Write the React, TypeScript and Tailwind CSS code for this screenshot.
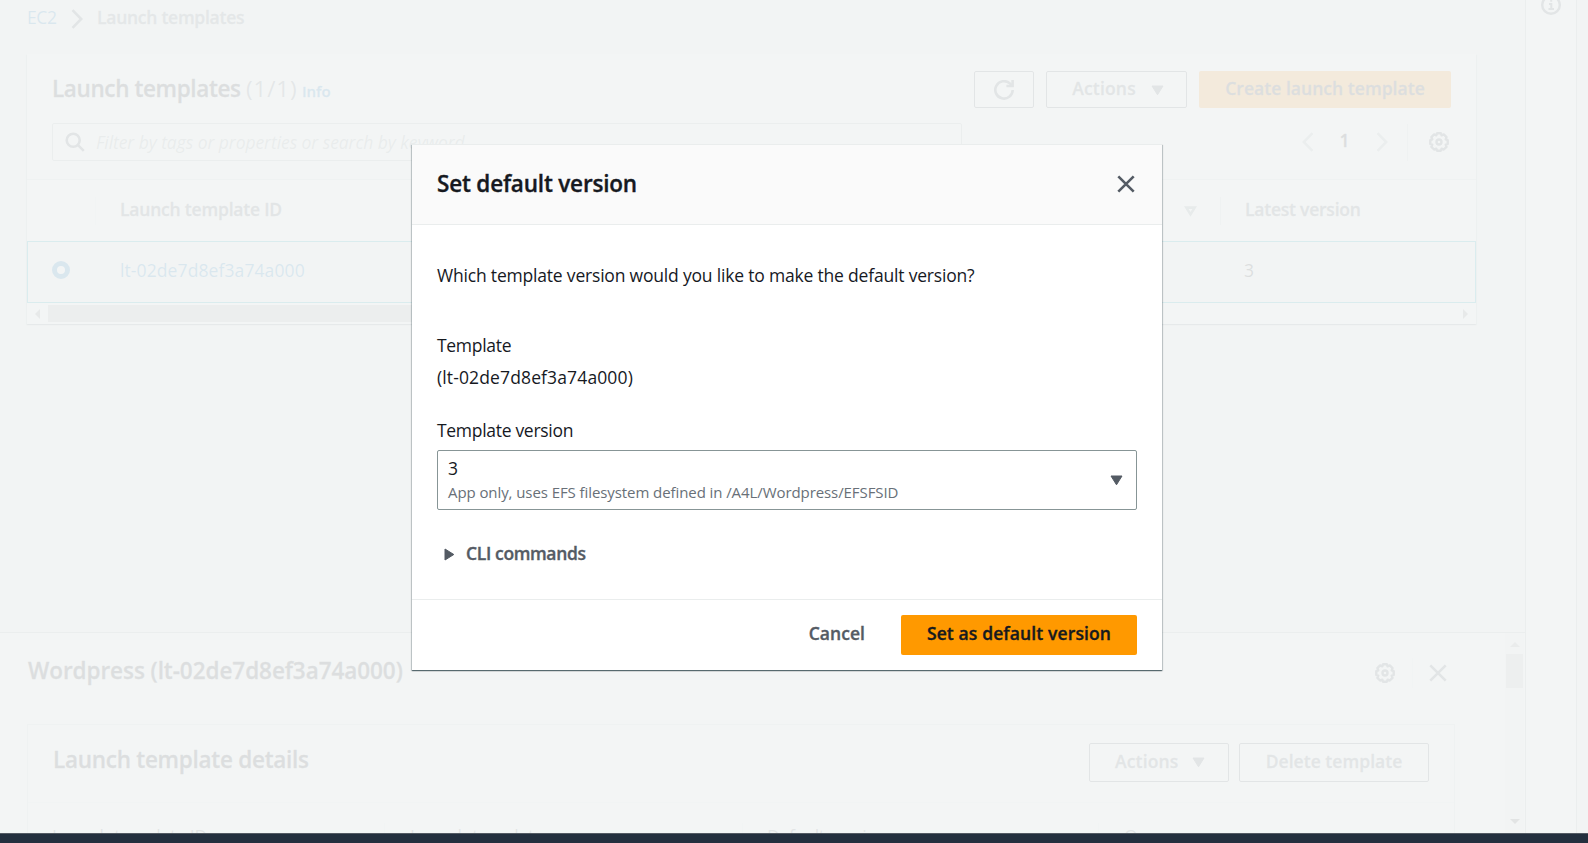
import React from "react";

function Caret({ className = "" }: { className?: string }) {
  return (
    <svg viewBox="0 0 13 11" className={`h-[11px] w-[13px] shrink-0 ${className}`} fill="currentColor" stroke="currentColor" strokeLinejoin="round">
      <path d="M1 1H12L6.5 9.8Z" strokeWidth="1" />
    </svg>
  );
}

function Cross({ className = "" }: { className?: string }) {
  return (
    <svg viewBox="0 0 20 20" className={`h-5 w-5 shrink-0 ${className}`} fill="none" stroke="currentColor" strokeWidth="2.6">
      <path d="M2.3 2.3L17.7 17.7M17.7 2.3L2.3 17.7" />
    </svg>
  );
}

function Gear() {
  return (
    <svg viewBox="0 0 20 20" className="h-5 w-5 shrink-0" fill="none" stroke="currentColor" strokeWidth="2.4" strokeLinejoin="round">
      <path d="M8.1 1.3H11.9L12.6 3.3L14.8 2.4L17.5 5.1L16.7 7.3L18.7 8.1V11.9L16.7 12.6L17.5 14.8L14.8 17.5L12.6 16.7L11.9 18.7H8.1L7.3 16.7L5.1 17.5L2.4 14.8L3.3 12.6L1.3 11.9V8.1L3.3 7.3L2.4 5.1L5.1 2.4L7.3 3.3Z" />
      <circle cx="10" cy="10" r="2.5" />
    </svg>
  );
}

function Chevron({ left = false, className = "" }: { left?: boolean; className?: string }) {
  return (
    <svg viewBox="0 0 12 20" className={`h-5 w-3 shrink-0 ${className}`} fill="none" stroke="currentColor" strokeWidth="2.6">
      <path d={left ? "M10.5 1.2L1.8 10L10.5 18.8" : "M1.5 1.2L10.2 10L1.5 18.8"} />
    </svg>
  );
}

function Breadcrumb() {
  return (
    <nav className="flex h-[54px] items-start pl-[27px] text-[17.5px] leading-[35px]">
      <a className="w-[44px] tracking-[-0.35px] text-[#0073bb]">EC2</a>
      <Chevron className="mt-[9px] w-[12px] text-[#545b64]" />
      <span className="ml-[14px] font-semibold tracking-[-0.26px] text-[#687078] [-webkit-text-stroke:0.35px]">Launch templates</span>
    </nav>
  );
}

function TemplateTable() {
  return (
    <section className="ml-[27px] flex h-[270px] w-[1449px] flex-col bg-white shadow-[0_1px_1px_#001c244d,1px_1px_1px_#001c2426,-1px_1px_1px_#001c2426]">
      <header className="flex h-[69px] items-start pl-[25px] pr-[25px] pt-[17px]">
        <h2 className="w-[194px] whitespace-nowrap text-[22.5px] font-semibold leading-[36px] tracking-[-0.38px] text-[#16191f] [-webkit-text-stroke:0.35px]">Launch templates</h2>
        <span className="w-[56px] text-[22.5px] leading-[36px] tracking-[0.85px] text-[#687078]">(1/1)</span>
        <a className="pt-[3px] text-[15px] font-semibold leading-[35px] text-[#0073bb] [-webkit-text-stroke:0.3px]">Info</a>
        <div className="ml-auto flex h-[37px] text-[17.5px] font-semibold leading-[32px] [-webkit-text-stroke:0.35px]">
          <button className="flex w-[60px] items-center justify-center rounded-[2px] border border-[#545b64] text-[#545b64]">
            <svg viewBox="0 0 20 20" className="h-5 w-5" fill="none" stroke="currentColor" strokeWidth="2.6">
              <path d="M18.7 10A8.7 8.7 0 1 1 15.8 3.4L17.6 5.2" />
              <path d="M18.6 0V6H12.4" />
            </svg>
          </button>
          <button className="ml-3 flex w-[141px] items-center rounded-[2px] border border-[#545b64] pl-[25px] tracking-[0.19px] text-[#545b64]">
            <span className="w-[64px] whitespace-nowrap pb-[3px]">Actions</span>
            <Caret className="ml-[15px] mt-[1px]" />
          </button>
          <button className="ml-3 w-[252px] rounded-[2px] bg-[#ff8c00] pb-[3px] tracking-[0.04px] text-[#16191f]">Create launch template</button>
        </div>
      </header>
      <div className="flex h-14 items-start pl-[25px] pr-[27px]">
        <div className="flex h-[38px] w-[910px] items-center rounded-[2px] border border-[#aab7b8] pl-[12px]">
          <svg viewBox="0 0 20 20" className="h-5 w-5 text-[#545b64]" fill="none" stroke="currentColor" strokeWidth="2.6">
            <circle cx="8.2" cy="8.2" r="6.5" />
            <path d="M12.8 12.8L18.8 18.8" />
          </svg>
          <span className="ml-[11px] pb-px text-[17.5px] italic leading-[34px] tracking-[-0.07px] text-[#98a4a5]">Filter by tags or properties or search by keyword</span>
        </div>
        <div className="ml-auto flex h-[38px] items-center">
          <Chevron left className="text-[#aab7b8]" />
          <span className="w-[61px] pb-1 text-center text-[17.5px] font-semibold leading-[30px] text-[#16191f] [-webkit-text-stroke:0.35px]">1</span>
          <Chevron className="ml-px text-[#aab7b8]" />
          <span className="ml-[19px] mr-[21px] h-[37px] w-px bg-[#d5dbdb]" />
          <span className="text-[#545b64]"><Gear /></span>
        </div>
      </div>
      <div className="flex h-[62px] shrink-0 items-center border-t border-[#d5dbdb] text-[17.5px] font-semibold leading-[34px] text-[#545b64] [-webkit-text-stroke:0.35px]">
        <span className="h-7 w-[69px] border-r border-[#eaeded]" />
        <span className="-mt-[3px] w-[1080px] pl-6 tracking-[-0.2px]">Launch template ID</span>
        <svg viewBox="0 0 13 11" className="ml-[8px] mt-0.5 h-[11px] w-[13px] text-[#879596]" fill="none" stroke="currentColor" strokeWidth="2.6">
          <path d="M2.3 1.6H10.7L6.5 8.4Z" />
        </svg>
        <span className="ml-[23px] h-7 w-px bg-[#d5dbdb]" />
        <span className="-mt-[3px] ml-[24px] tracking-[-0.23px]">Latest version</span>
      </div>
      <div className="flex h-[62px] shrink-0 items-center border border-[#00a1b9] bg-[#f2f3f3] text-[17.5px] leading-[34px]">
        <span className="-mt-[4px] ml-6 h-[18px] w-[18px] rounded-full border-[5.5px] border-[#0073bb] bg-white" />
        <a className="-mt-1 ml-[50px] w-[1124px] tracking-[0.1px] text-[#0073bb]">lt-02de7d8ef3a74a000</a>
        <span className="-mt-1 text-[#16191f]">3</span>
      </div>
      <div className="flex flex-1 items-center bg-[#f8f8f8] pl-2 pr-[8px] text-[#888888]">
        <svg viewBox="0 0 5 10" className="h-[10px] w-[5px]" fill="currentColor"><path d="M5 0V10L0 5Z" /></svg>
        <span className="ml-2 h-[17px] w-[1060px] bg-[#b5b5b5]" />
        <svg viewBox="0 0 5 10" className="ml-auto h-[10px] w-[5px]" fill="currentColor"><path d="M0 0V10L5 5Z" /></svg>
      </div>
    </section>
  );
}

function DetailPanel() {
  return (
    <section className="flex h-[201px] shrink-0 border-t border-[#aab7b8] bg-[#fafafa]">
      <div className="flex w-[1505px] shrink-0 flex-col">
        <header className="flex h-[91px] shrink-0 items-start pl-[28px] pr-[57px]">
          <h2 className="pt-[20px] text-[22.5px] font-semibold leading-[36px] tracking-[-0.06px] text-[#16191f] [-webkit-text-stroke:0.35px]">Wordpress (lt-02de7d8ef3a74a000)</h2>
          <div className="ml-auto flex items-center pt-[25px] text-[#545b64]">
            <Gear />
            <span className="ml-[17px] mr-[15px] h-[30px] w-px bg-[#eaeded]" />
            <Cross />
          </div>
        </header>
        <div className="ml-[27px] flex w-[1428px] flex-1 flex-col border border-b-0 border-[#d5dbdb] bg-white">
          <header className="flex h-[78px] shrink-0 items-start border-b border-[#eaeded] pl-[25px] pr-[25px] pt-[18px] text-[17.5px] font-semibold leading-[33px] text-[#545b64] [-webkit-text-stroke:0.35px]">
            <h3 className="text-[22.5px] leading-[34px] tracking-[-0.27px] text-[#16191f]">Launch template details</h3>
            <button className="ml-auto flex h-[39px] w-[140px] items-center rounded-[2px] border border-[#545b64] pl-[25px] tracking-[0.15px]">
              <span className="w-[63px] whitespace-nowrap pb-[3px]">Actions</span>
              <Caret className="ml-[14px]" />
            </button>
            <button className="ml-2.5 h-[39px] w-[190px] rounded-[2px] border border-[#545b64] pb-[3px] tracking-[0.04px]">Delete template</button>
          </header>
          <div className="flex shrink-0 items-start pt-[20px] text-[17.5px] leading-[26px] tracking-[-0.24px] text-[#545b64] [&>span]:h-[36px] [&>span]:whitespace-nowrap">
            <span className="w-[357px] border-r border-[#eaeded] pl-6">Launch template ID</span>
            <span className="w-[358px] border-r border-[#eaeded] pl-[25px]">Launch template name</span>
            <span className="w-[356px] border-r border-[#eaeded] pl-6">Default version</span>
            <span className="pl-[25px]">Owner</span>
          </div>
        </div>
      </div>
      <div className="flex w-[19px] flex-col items-center bg-[#f1f1f1] pt-[9px] text-[#505050]">
        <svg viewBox="0 0 10 5" className="h-[5px] w-[10px] text-[#a3a3a3]" fill="currentColor"><path d="M0 5H10L5 0Z" /></svg>
        <span className="mt-[7px] h-[34px] w-[17px] bg-[#c1c1c1]" />
        <svg viewBox="0 0 10 5" className="mt-[131px] h-[5px] w-[10px]" fill="currentColor"><path d="M0 0H10L5 5Z" /></svg>
      </div>
    </section>
  );
}

function SetDefaultModal() {
  return (
    <div className="absolute left-[412px] top-[144px] flex h-[526px] w-[750px] flex-col border-t border-[#eaeded] bg-white text-[17.5px] text-[#16191f] shadow-[0_1px_1px_#001c2480,1px_1px_1px_#001c2426,-1px_1px_1px_#001c2426]">
      <header className="flex h-20 shrink-0 items-start justify-between border-b border-[#eaeded] bg-[#fafafa] pl-[25px] pr-[26px]">
        <h2 className="pt-[21px] text-[22.5px] font-semibold leading-[35px] tracking-[-0.19px] [-webkit-text-stroke:0.35px]">Set default version</h2>
        <Cross className="mt-[29px] text-[#545b64]" />
      </header>
      <div className="flex flex-1 flex-col items-stretch px-[25px] pt-[36px] leading-[28px]">
        <p className="tracking-[-0.19px]">Which template version would you like to make the default version?</p>
        <p className="mt-[42px] tracking-[-0.3px]">Template</p>
        <p className="mt-[4px] tracking-[0.13px]">(lt-02de7d8ef3a74a000)</p>
        <label className="mt-[25px] tracking-[-0.3px]">Template version</label>
        <div className="mt-[6px] flex h-[60px] shrink-0 items-center justify-between rounded-[2px] border border-[#879596] pl-[10px] pr-[13px]">
          <div className="flex flex-col">
            <span className="leading-[25px]">3</span>
            <span className="text-[15px] leading-[23px] tracking-[-0.08px] text-[#687078]">App only, uses EFS filesystem defined in /A4L/Wordpress/EFSFSID</span>
          </div>
          <Caret className="text-[#545b64]" />
        </div>
        <div className="mt-[29px] flex items-center text-[#545b64]">
          <svg viewBox="0 0 11 13" className="ml-[7px] mt-[3px] h-[13px] w-[11px]" fill="currentColor" stroke="currentColor" strokeLinejoin="round">
            <path d="M1 1V12L9.8 6.5Z" />
          </svg>
          <span className="ml-[11px] font-semibold tracking-[-0.36px] [-webkit-text-stroke:0.35px]">CLI commands</span>
        </div>
      </div>
      <footer className="flex h-[71px] items-center justify-end border-t border-[#eaeded] pr-[25px] font-semibold [-webkit-text-stroke:0.35px]">
        <button className="mr-[36px] pb-[4px] leading-[34px] tracking-[0.05px] text-[#545b64]">Cancel</button>
        <button className="h-10 w-[236px] rounded-[2px] bg-[#ff9900] pb-[4px] leading-[34px] tracking-[0.12px]">Set as default version</button>
      </footer>
    </div>
  );
}

export default function App() {
  return (
    <div className="relative flex h-[843px] w-[1588px] flex-col overflow-hidden bg-[#f2f3f3] font-['Open_Sans',sans-serif]">
      <div className="flex h-[833px] shrink-0 overflow-hidden">
        <main className="flex w-[1525px] flex-col">
          <div className="flex h-[632px] shrink-0 flex-col bg-[#f2f3f3]">
            <Breadcrumb />
            <TemplateTable />
          </div>
          <DetailPanel />
        </main>
        <aside className="flex w-[52px] justify-center border-x border-[#aab7b8] bg-[#fafafa] text-[#545b64]">
          <svg viewBox="0 0 20 20" className="-mt-[5px] h-5 w-5" fill="none" stroke="currentColor" strokeWidth="2.4">
            <circle cx="10" cy="10" r="8.8" />
            <path d="M8 9H10.3V14M7.5 14H13M10.2 4.6V6.8" strokeWidth="2" />
          </svg>
        </aside>
      </div>
      <div className="absolute inset-0 bg-[#f2f4f4]/90" />
      <SetDefaultModal />
      <footer className="relative h-[10px] shrink-0 border-t border-[#545b64] bg-[#232f3e]" />
    </div>
  );
}
